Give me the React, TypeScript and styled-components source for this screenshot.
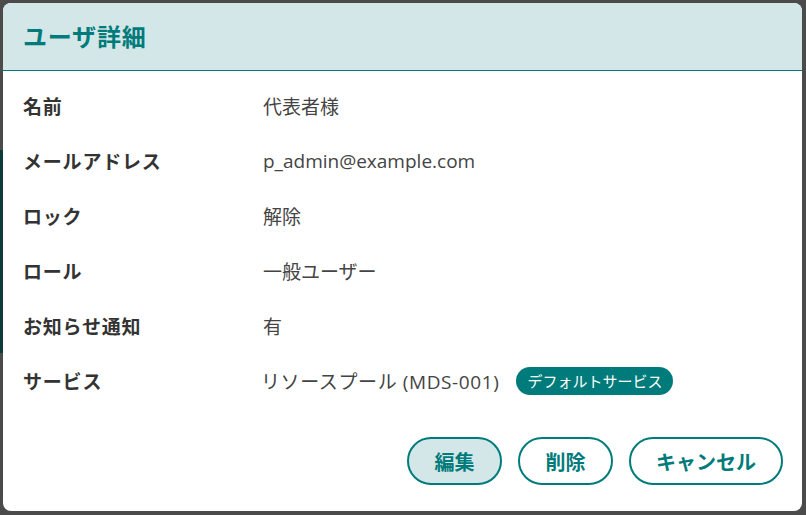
import React from "react";
import styled, { createGlobalStyle } from "styled-components";

const teal = "#007b7b";
const tealLight = "#d4e7e8";

const GlobalStyle = createGlobalStyle`
  html, body {
    margin: 0;
    padding: 0;
    height: 100%;
  }
  body {
    font-family: "Open Sans", "Noto Sans CJK JP", sans-serif;
    background: #4b4b4b;
  }
  #root {
    height: 100%;
  }
`;

const Backdrop = styled.div`
  box-sizing: border-box;
  width: 806px;
  height: 515px;
  padding: 3px 4px 4px 3px;
  background:
    linear-gradient(to bottom, transparent 150px, #0d3a3a 150px, #0d3a3a 353px, transparent 353px) left / 3px 100% no-repeat,
    #4b4b4b;
`;

const Dialog = styled.div`
  height: 100%;
  background: #fff;
  border-radius: 8px;
  overflow: hidden;
  display: flex;
  flex-direction: column;
`;

const Header = styled.header`
  height: 68px;
  box-sizing: border-box;
  background: ${tealLight};
  border-bottom: 1px solid ${teal};
  display: flex;
  align-items: center;
  padding: 0 20px 2px;
`;

const Title = styled.h2`
  margin: 0;
  font-size: 24px;
  font-weight: 700;
  color: ${teal};
  letter-spacing: 0.8px;
`;

const Body = styled.div`
  padding: 7px 20px 0;
  flex: 1;
`;

const Row = styled.div`
  display: grid;
  grid-template-columns: 240px 1fr;
  align-items: center;
  height: 55px;
`;

const Label = styled.div`
  font-size: 19px;
  font-weight: 700;
  color: #333;
  letter-spacing: 0.8px;
`;

const Value = styled.div<{ $shift?: number }>`
  font-size: 19px;
  color: #444;
  display: flex;
  align-items: center;
  gap: 17px;
  margin-left: ${p => p.$shift ?? 0}px;
`;

const ServiceName = styled.span`
  letter-spacing: 0.6px;
`;

const Badge = styled.span`
  background: ${teal};
  color: #fff;
  font-size: 15px;
  line-height: 28px;
  padding: 0 11px;
  border-radius: 14px;
`;

const Footer = styled.div`
  display: flex;
  justify-content: flex-end;
  gap: 16px;
  padding: 0 19px 26px;
`;

const Button = styled.button<{ $primary?: boolean }>`
  height: 48px;
  min-width: 95px;
  padding: 0 25px;
  border: 2px solid ${teal};
  border-radius: 24px;
  background: ${p => (p.$primary ? tealLight : "#fff")};
  color: ${teal};
  font-family: inherit;
  font-size: 20px;
  font-weight: 700;
  cursor: pointer;
`;

const rows: { label: string; value: string }[] = [
  { label: "名前", value: "代表者様" },
  { label: "メールアドレス", value: "p_admin@example.com" },
  { label: "ロック", value: "解除" },
  { label: "ロール", value: "一般ユーザー" },
  { label: "お知らせ通知", value: "有" },
];

export default function App() {
  return (
    <>
      <GlobalStyle />
      <Backdrop>
        <Dialog>
          <Header>
            <Title>ユーザ詳細</Title>
          </Header>
          <Body>
            {rows.map(r => (
              <Row key={r.label}>
                <Label>{r.label}</Label>
                <Value>{r.value}</Value>
              </Row>
            ))}
            <Row>
              <Label>サービス</Label>
              <Value $shift={-2}>
                <ServiceName>リソースプール (MDS-001)</ServiceName>
                <Badge>デフォルトサービス</Badge>
              </Value>
            </Row>
          </Body>
          <Footer>
            <Button $primary>編集</Button>
            <Button>削除</Button>
            <Button>キャンセル</Button>
          </Footer>
        </Dialog>
      </Backdrop>
    </>
  );
}
